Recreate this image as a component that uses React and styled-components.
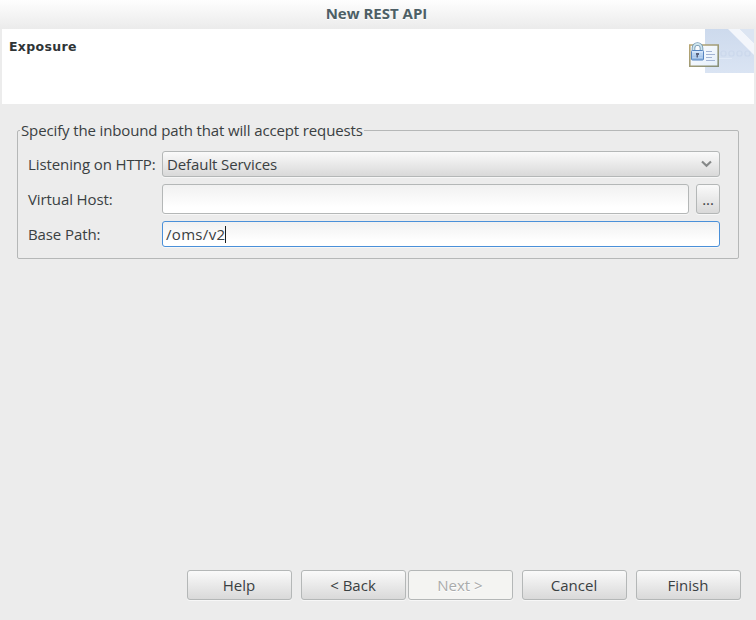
import React, { useState } from "react";
import styled, { createGlobalStyle, css } from "styled-components";

const GlobalStyle = createGlobalStyle`
  *, *::before, *::after { box-sizing: border-box; }
  body { margin: 0; background: #ececec; }
  button, input { font: inherit; color: inherit; letter-spacing: inherit; }
`;

const Dialog = styled.div`
  width: 756px;
  height: 620px;
  display: flex;
  flex-direction: column;
  overflow: hidden;
  background: #ececec;
  color: #3a4042;
  font: 15px/20px "Open Sans", "Noto Sans", sans-serif;
  letter-spacing: -0.1px;
`;

const TitleBar = styled.header`
  height: 29px;
  flex: none;
  background: linear-gradient(#fefefe, #ebebeb);
  color: #4d5f66;
  font-size: 15px;
  font-weight: 700;
  line-height: 27px;
  letter-spacing: 0;
  text-align: center;
  text-shadow: 0 1px 0 #fff;
  padding-right: 3px;
`;

const Banner = styled.section`
  height: 75px;
  flex: none;
  margin: 0 2px;
  background: #fff;
  display: flex;
  justify-content: space-between;
`;

const BannerTitle = styled.h1`
  margin: 8px 0 0 7px;
  font: 700 12.5px/20px "DejaVu Sans", sans-serif;
  letter-spacing: 0.32px;
  color: #2e3436;
`;

const Body = styled.main`
  flex: 1;
  padding: 16px 17px 0;
`;

const Group = styled.fieldset`
  margin: 0;
  min-width: 0;
  height: 139px;
  padding: 0 18px 0 10px;
  border: 1px solid #b5b7b7;
  border-radius: 2px;
`;

const Legend = styled.legend`
  height: 20px;
  padding: 0 1px 0 1px;
  margin-left: -8px;
  line-height: 20px;
  letter-spacing: -0.13px;
`;

const Fields = styled.div`
  display: grid;
  grid-template-columns: 134px 1fr;
  grid-template-rows: 26px 30px 26px;
  row-gap: 7px;
  padding-top: 11px;
`;

const Label = styled.label`
  align-self: center;
  white-space: nowrap;
`;

const raised = css`
  border: 1px solid #b4b7b7;
  border-radius: 3px;
  background: linear-gradient(#fafafa, #d9d9d9);
  box-shadow: 0 1px 0 #f7f7f7;
`;

const Select = styled.button`
  ${raised}
  display: flex;
  align-items: center;
  justify-content: space-between;
  padding: 0 7px 0 4px;
  text-align: left;
`;

const HostRow = styled.div`
  display: grid;
  grid-template-columns: 1fr 24px;
  gap: 7px;
`;

const field = css`
  border: 1px solid ${(p) => (p.$focused ? "#4a90d9" : "#b4b7b7")};
  border-radius: 3px;
  background: linear-gradient(#f1f1f1, #fff 80%);
  box-shadow: 0 1px 0 #f7f7f7;
`;

const TextInput = styled.input`
  ${field}
  width: 100%;
  min-width: 0;
  padding: 0 4px;
  outline: none;
`;

const FocusedField = styled.div`
  ${field}
  display: flex;
  align-items: center;
  padding: 0 3px;
  letter-spacing: 0.32px;
`;

const Caret = styled.span`
  width: 1px;
  height: 17px;
  background: #1b1d1e;
`;

const BrowseButton = styled.button`
  ${raised}
  padding: 0;
  text-align: center;
`;

const Footer = styled.footer`
  display: flex;
  justify-content: flex-end;
  gap: 9px;
  padding: 0 15px 20px 0;
  letter-spacing: 0;
`;

const StepButtons = styled.div`
  display: flex;
  gap: 2px;
`;

const Button = styled.button`
  ${raised}
  width: 105px;
  height: 30px;
  padding: 0 1px 0 0;
  text-align: center;
  &:disabled {
    background: #f4f4f2;
    color: #a9abab;
    text-shadow: 0 1px 0 #fff;
  }
`;

const BannerArt = () => (
  <svg width="66" height="44" viewBox="0 0 66 44" aria-hidden="true">
    <defs>
      <linearGradient id="sky" x1="0" y1="0" x2="0" y2="1">
        <stop offset="0" stopColor="#cddaed" />
        <stop offset="1" stopColor="#dae4f3" />
      </linearGradient>
      <linearGradient id="card" x1="0" y1="0" x2="1" y2="1">
        <stop offset="0" stopColor="#fff" />
        <stop offset="1" stopColor="#e3eefb" />
      </linearGradient>
      <linearGradient id="edge" x1="0" y1="0" x2="1" y2="1">
        <stop offset="0" stopColor="#b9a672" />
        <stop offset="1" stopColor="#87907a" />
      </linearGradient>
      <linearGradient id="lock" x1="0" y1="0" x2="0" y2="1">
        <stop offset="0" stopColor="#dcecff" />
        <stop offset="1" stopColor="#8db2de" />
      </linearGradient>
    </defs>
    <path d="M17 0h49v44H17z" fill="url(#sky)" />
    <path d="M40 0h12l14 14v12z" fill="#f3f6fb" />
    <path d="M52 0h14v14z" fill="#dce5f2" />
    <g fill="none" stroke="#cbd8ec" strokeWidth="1.2">
      <rect x="33" y="22" width="5" height="5" rx="2" />
      <rect x="41" y="22" width="5" height="5" rx="2" />
      <rect x="49" y="22" width="5" height="5" rx="2" />
      <rect x="57" y="22" width="5" height="5" rx="2" />
    </g>
    <path d="M31 29.500h13" stroke="#e0e9f6" />
    <path d="M1.800 16h28.400v21.200H1.800z" fill="url(#card)" stroke="url(#edge)" strokeWidth="1.600" />
    <path d="M18 22.500h6M18 25.500h9M18 28.500h6M18 31.500h9" stroke="#a3b4d4" />
    <path d="M5.500 22v-3a4 4 0 0 1 8 0v3" fill="none" stroke="#7799b5" strokeWidth="3.600" />
    <path d="M5.500 22v-3a4 4 0 0 1 8 0v3" fill="none" stroke="#cfe6ee" strokeWidth="1.800" />
    <rect x="3.500" y="21.500" width="12" height="9.500" rx="1" fill="url(#lock)" stroke="#5684c0" />
    <path d="M4.500 24.500h10M4.500 28.500h10" stroke="#b8d2f0" />
    <path d="M8 24h3v2h-1v2.500H8.500v-2.500H8z" fill="#56617e" />
  </svg>
);

export default function App() {
  const [host, setHost] = useState("");
  return (
    <>
      <GlobalStyle />
      <Dialog>
        <TitleBar>New REST API</TitleBar>
        <Banner>
          <BannerTitle>Exposure</BannerTitle>
          <BannerArt />
        </Banner>
        <Body>
          <Group>
            <Legend>Specify the inbound path that will accept requests</Legend>
            <Fields>
              <Label>Listening on HTTP:</Label>
              <Select type="button">
                Default Services
                <svg width="12" height="10" viewBox="0 0 12 10" aria-hidden="true">
                  <path d="M2 2.500L6.500 6.700l4.500-4.200" fill="none" stroke="#858888" strokeWidth="2.200" />
                </svg>
              </Select>
              <Label htmlFor="host">Virtual Host:</Label>
              <HostRow>
                <TextInput id="host" value={host} onChange={(e) => setHost(e.target.value)} />
                <BrowseButton type="button">...</BrowseButton>
              </HostRow>
              <Label>Base Path:</Label>
              <FocusedField $focused>
                /oms/v2
                <Caret />
              </FocusedField>
            </Fields>
          </Group>
        </Body>
        <Footer>
          <Button type="button">Help</Button>
          <StepButtons>
            <Button type="button">&lt; Back</Button>
            <Button type="button" disabled>Next &gt;</Button>
          </StepButtons>
          <Button type="button">Cancel</Button>
          <Button type="button">Finish</Button>
        </Footer>
      </Dialog>
    </>
  );
}
